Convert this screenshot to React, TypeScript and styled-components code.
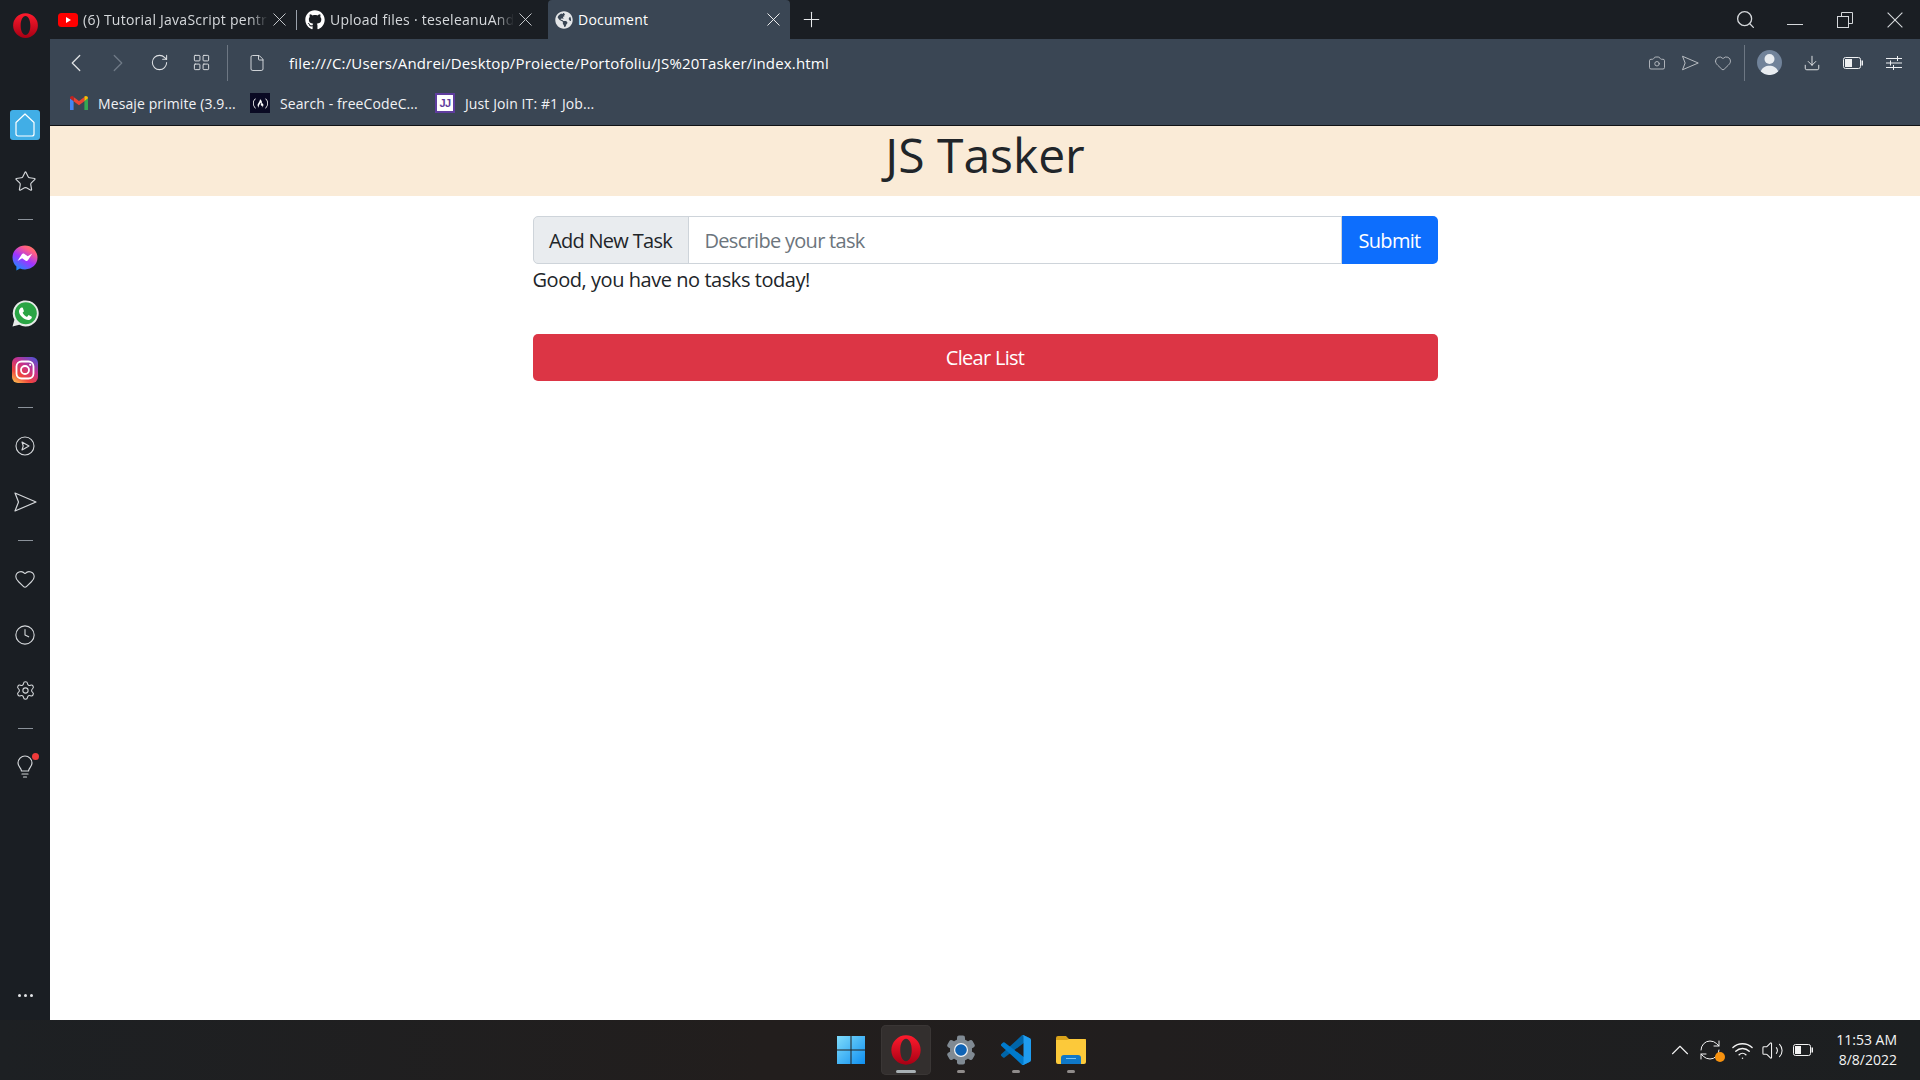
import React from "react";
import styled, { createGlobalStyle } from "styled-components";
import {
  Camera,
  ChevronLeft,
  ChevronRight,
  ChevronUp,
  Clock,
  Download,
  File,
  Heart,
  LayoutGrid,
  Plus,
  RefreshCw,
  RotateCw,
  Search,
  Settings,
  Star,
  Volume2,
  Wifi,
} from "lucide-react";
import { FaGithub, FaGlobeAmericas } from "react-icons/fa";
import { SiFreecodecamp } from "react-icons/si";

const GlobalStyle = createGlobalStyle`
  html, body {
    margin: 0;
    padding: 0;
    height: 100%;
    overflow: hidden;
  }
  * {
    box-sizing: border-box;
  }
  body {
    font-family: "Open Sans", "Liberation Sans", sans-serif;
  }
`;

const Screen = styled.div`
  width: 1920px;
  height: 1080px;
  display: flex;
  flex-direction: column;
`;
const Desktop = styled.div`
  flex: 1;
  display: flex;
  min-height: 0;
`;

/* left rail */
const Rail = styled.nav`
  width: 50px;
  flex-shrink: 0;
  background: #1a1e23;
  display: flex;
  flex-direction: column;
  align-items: center;
  color: #d4d7da;
`;
const RailLogo = styled.div`
  height: 97px;
  padding-top: 12px;
  display: flex;
  justify-content: center;
`;
const RailSlot = styled.div`
  height: 56px;
  width: 100%;
  display: flex;
  align-items: center;
  justify-content: center;
  position: relative;
`;
const RailDash = styled.div`
  height: 20.5px;
  display: flex;
  align-items: center;
  &::before {
    content: "";
    width: 15px;
    height: 1px;
    background: #8b929a;
  }
`;
const RailMore = styled(RailSlot)`
  margin-top: auto;
  height: 50px;
  gap: 3px;
`;
const MoreDot = styled.span`
  width: 3px;
  height: 3px;
  border-radius: 50%;
  background: #e3e5e7;
`;
const HomeButton = styled.div`
  width: 30px;
  height: 30px;
  border-radius: 3px;
  background: #41aee6;
  display: flex;
  align-items: center;
  justify-content: center;
`;
const NoticeDot = styled.span`
  position: absolute;
  top: 14px;
  right: 11px;
  width: 7px;
  height: 7px;
  border-radius: 50%;
  background: #f03a3a;
`;

/* browser */
const Browser = styled.div`
  flex: 1;
  min-width: 0;
  display: flex;
  flex-direction: column;
`;
const TabStrip = styled.div`
  height: 39px;
  flex-shrink: 0;
  background: #1a1e23;
  display: flex;
  align-items: stretch;
  color: #d6d9dc;
`;
const Tab = styled.div<{ $active?: boolean; $width: number; $left: number; $right: number }>`
  width: ${(p) => p.$width}px;
  padding: 0 ${(p) => p.$right}px 0 ${(p) => p.$left}px;
  background: ${(p) => (p.$active ? "#3a4654" : "transparent")};
  border-radius: ${(p) => (p.$active ? "4px 4px 0 0" : "0")};
  display: flex;
  align-items: center;
  gap: 5px;
  font-size: 14px;
  letter-spacing: 0.25px;
  color: ${(p) => (p.$active ? "#ffffff" : "#d6d9dc")};
`;
const TabTitle = styled.span<{ $fade?: boolean }>`
  flex: 1;
  min-width: 0;
  white-space: nowrap;
  ${(p) =>
    p.$fade &&
    "mask-image: linear-gradient(to right, #000 90%, transparent 100%);"}
`;
const TabDivider = styled.div`
  width: 1px;
  height: 20px;
  align-self: center;
  background: #9aa2ab;
`;
const NewTab = styled.div`
  width: 43px;
  display: flex;
  align-items: center;
  justify-content: center;
  color: #e8eaec;
`;
const WindowControls = styled.div`
  margin-left: auto;
  display: flex;
  align-items: center;
  color: #d5d8db;
`;
const WindowButton = styled.div`
  width: 50px;
  display: flex;
  justify-content: center;
`;
const MinimizeLine = styled.span`
  width: 16px;
  height: 1px;
  margin-top: 9px;
  background: #d5d8db;
`;

const Chrome = styled.div`
  height: 87px;
  flex-shrink: 0;
  background: #3a4654;
  border-bottom: 1px solid #101215;
  display: flex;
  flex-direction: column;
`;
const AddressRow = styled.div`
  height: 47px;
  display: flex;
  align-items: center;
  color: #dfe2e5;
`;
const NavButton = styled.div<{ $dim?: boolean; $width?: number }>`
  width: ${(p) => p.$width ?? 42}px;
  display: flex;
  align-items: center;
  justify-content: center;
  color: ${(p) => (p.$dim ? "#6f7a87" : "#dfe2e5")};
`;
const NavGroup = styled.div`
  display: flex;
  align-items: center;
  padding: 0 5px 0 5px;
`;
const ChromeDivider = styled.div`
  width: 1px;
  height: 36px;
  background: #6d7783;
`;
const PageIcon = styled.div`
  margin-left: 20px;
  display: flex;
`;
const Url = styled.div`
  margin-left: 23px;
  font-size: 15px;
  letter-spacing: 0.18px;
  color: #ffffff;
  white-space: nowrap;
`;
const RightTools = styled.div`
  margin-left: auto;
  padding-right: 6px;
  display: flex;
  align-items: center;
`;
const ToolButton = styled.div<{ $width?: number; $light?: boolean }>`
  width: ${(p) => p.$width ?? 33}px;
  display: flex;
  justify-content: center;
  color: ${(p) => (p.$light ? "#eef0f2" : "#c6cace")};
`;
const ToolSeparator = styled(ChromeDivider)`
  margin-left: 5px;
`;
const Avatar = styled.div`
  margin: 0 9px 0 12px;
  width: 25px;
  height: 25px;
  display: flex;
`;
const BookmarkRow = styled.div`
  flex: 1;
  display: flex;
  align-items: center;
  padding-left: 20px;
  padding-bottom: 5px;
  gap: 16px;
`;
const Bookmark = styled.div<{ $width: number }>`
  width: ${(p) => p.$width}px;
  display: flex;
  align-items: center;
  gap: 10px;
  font-size: 14px;
  letter-spacing: 0.1px;
  color: #f1f2f4;
  white-space: nowrap;
`;
const CodeCampBadge = styled.div`
  width: 20px;
  height: 20px;
  background: #0a0a23;
  color: #ffffff;
  display: flex;
  align-items: center;
  justify-content: center;
  flex-shrink: 0;
`;
const JustJoinBadge = styled.span`
  width: 20px;
  height: 20px;
  flex-shrink: 0;
  background: #ffffff;
  border: 2px solid #5f3d9e;
  color: #5f3d9e;
  font: 700 11px/16px "Liberation Sans", sans-serif;
  letter-spacing: -0.5px;
  text-align: center;
`;

/* page */
const Page = styled.main`
  flex: 1;
  background: #ffffff;
  color: #212529;
`;
const Header = styled.header`
  height: 70px;
  background: #faebd7;
  text-align: center;
`;
const Title = styled.h1`
  margin: 0;
  font-size: 48px;
  font-weight: 400;
  line-height: 58px;
  letter-spacing: 0;
  color: #212529;
`;
const Content = styled.section`
  width: 905px;
  margin: 20px auto 0;
`;
const InputGroup = styled.form`
  display: flex;
  height: 48px;
`;
const GroupLabel = styled.span`
  width: 156px;
  display: flex;
  align-items: center;
  justify-content: center;
  background: #e9ecef;
  border: 1px solid #ced4da;
  border-radius: 5px 0 0 5px;
  font-size: 20px;
  letter-spacing: -0.7px;
  color: #212529;
  white-space: nowrap;
`;
const TaskInput = styled.input`
  flex: 1;
  min-width: 0;
  margin-left: -1px;
  padding: 0 16px;
  border: 1px solid #ced4da;
  outline: none;
  font: inherit;
  font-size: 20px;
  letter-spacing: -0.7px;
  color: #212529;
  &::placeholder {
    color: #6c757d;
    opacity: 1;
  }
`;
const SubmitButton = styled.button`
  width: 96px;
  border: 0;
  padding: 0;
  border-radius: 0 5px 5px 0;
  background: #0d6efd;
  color: #ffffff;
  font: inherit;
  font-size: 20px;
  letter-spacing: -0.7px;
`;
const Message = styled.p`
  margin: 0;
  height: 70px;
  font-size: 20px;
  line-height: 32px;
  letter-spacing: -0.45px;
`;
const ClearButton = styled.button`
  width: 100%;
  height: 47px;
  border: 0;
  border-radius: 5px;
  background: #dc3545;
  color: #ffffff;
  font: inherit;
  font-size: 20px;
  letter-spacing: -0.7px;
`;

/* taskbar */
const Taskbar = styled.footer`
  height: 60px;
  flex-shrink: 0;
  background: linear-gradient(to right, #1d2023, #221e1d 40%, #211e1e 60%, #1c1f21);
  display: grid;
  grid-template-columns: 1fr auto 1fr;
  align-items: center;
`;
const TaskIcons = styled.div`
  grid-column: 2;
  margin-left: 1px;
  display: flex;
  gap: 5px;
`;
const TaskIcon = styled.div<{ $active?: boolean }>`
  width: 50px;
  height: 50px;
  position: relative;
  display: flex;
  align-items: center;
  justify-content: center;
  border-radius: 5px;
  ${(p) =>
    p.$active &&
    "background: #332f2e; box-shadow: inset 0 0 0 1px #3a3635;"}
`;
const RunDot = styled.span<{ $wide?: boolean }>`
  position: absolute;
  bottom: 2px;
  left: 50%;
  transform: translateX(-50%);
  width: ${(p) => (p.$wide ? 20 : 8)}px;
  height: 3px;
  border-radius: 2px;
  background: ${(p) => (p.$wide ? "#a9b1b5" : "#8f8b8a")};
`;
const Tray = styled.div`
  justify-self: end;
  display: flex;
  align-items: center;
  padding-right: 23px;
  color: #f2f2f2;
`;
const TrayIcon = styled.div<{ $width: number }>`
  width: ${(p) => p.$width}px;
  position: relative;
  display: flex;
  justify-content: center;
`;
const SyncDot = styled.span`
  position: absolute;
  right: 0;
  bottom: 0;
  width: 10px;
  height: 10px;
  border-radius: 50%;
  background: #f7920f;
`;
const Clockface = styled.div`
  margin-left: 15px;
  text-align: right;
  font-size: 14px;
  line-height: 20px;
  color: #f4f4f4;
`;

/* drawn logos */
function CloseIcon({ size }: { size: number }) {
  return (
    <svg width={size} height={size} viewBox="0 0 13 13" fill="none" stroke="currentColor" strokeWidth="0.9" style={{ flexShrink: 0 }}>
      <path d="M.5.5l12 12M12.500.5l-12 12" />
    </svg>
  );
}
function OperaLogo({ size }: { size: number }) {
  return (
    <svg width={size} height={size} viewBox="0 0 24 24">
      <defs>
        <linearGradient id={`op${size}`} x1="0" y1="0" x2="0" y2="1">
          <stop offset="0" stopColor="#ff1b2d" />
          <stop offset="1" stopColor="#a70014" />
        </linearGradient>
      </defs>
      <path
        fillRule="evenodd"
        fill={`url(#op${size})`}
        d="M12 1a11 11 0 1 0 0 22 11 11 0 0 0 0-22zm0 2.6c2.6 0 4.3 3.8 4.3 8.4s-1.7 8.4-4.3 8.4-4.3-3.8-4.3-8.4 1.7-8.4 4.3-8.4z"
      />
    </svg>
  );
}
function YoutubeLogo() {
  return (
    <svg width="20" height="14" viewBox="0 0 20 14" style={{ flexShrink: 0 }}>
      <rect width="20" height="14" rx="3.500" fill="#f00" />
      <path d="M8 4l5 3-5 3z" fill="#fff" />
    </svg>
  );
}
function GmailLogo() {
  return (
    <svg width="18" height="14" viewBox="0 0 18 14" style={{ flexShrink: 0 }}>
      <path d="M0 2.200V14h3.600V5z" fill="#4285f4" />
      <path d="M18 2.200V14h-3.600V5z" fill="#34a853" />
      <path d="M3.600 5.200V1L9 5l5.400-4v4.200L9 9.200z" fill="#ea4335" />
      <path d="M0 2.200C0 .4 2.200-.6 3.600.6v4.600z" fill="#c5221f" />
      <path d="M18 2.200C18 .4 15.800-.6 14.400.6v4.600z" fill="#fbbc04" />
    </svg>
  );
}
function MessengerLogo() {
  return (
    <svg width="26" height="26" viewBox="0 0 26 26">
      <defs>
        <linearGradient id="ms" x1="0.2" y1="1" x2="0.8" y2="0">
          <stop offset="0" stopColor="#1292ff" />
          <stop offset="0.45" stopColor="#a033ff" />
          <stop offset="0.8" stopColor="#ff5c87" />
          <stop offset="1" stopColor="#ff7a59" />
        </linearGradient>
      </defs>
      <path
        fill="url(#ms)"
        d="M13 .5C6 .5.5 5.700.5 12.600c0 3.600 1.500 6.800 3.900 9v3.900l3.600-2c1.500.6 3.200.9 5 .9 7 0 12.500-5.200 12.500-11.800S20 .5 13 .5z"
      />
      <path
        fill="#fff"
        d="M5.500 16l4.200-6.600c.6-.9 1.900-1.100 2.800-.5l3.200 2.400 4.600-2.800-4.200 6.600c-.6.9-1.900 1.100-2.800.5l-3.200-2.400z"
      />
    </svg>
  );
}
function WhatsappLogo() {
  return (
    <svg width="27" height="27" viewBox="0 0 27 27">
      <path fill="#e8ebe9" d="M.5 26.500l1.900-6.700A13 13 0 1 1 7.300 24.700z" />
      <circle cx="13.800" cy="13.300" r="11" fill="#2aa544" />
      <path
        fill="#fff"
        d="M10 7.500c-.5 0-1.300.2-1.900 1-.6.800-1.200 1.800-1.100 3.200.2 2 1.500 3.900 3.300 5.600 2 1.800 4 2.700 6 2.800 1.400 0 2.500-.7 3.100-1.500.4-.6.500-1.400.4-1.900l-3.200-1.600-1.600 1.800c-1.700-.6-3.600-2.300-4.400-4.200l1.400-1.500-1.200-3.500z"
      />
    </svg>
  );
}
function InstagramLogo() {
  return (
    <svg width="26" height="26" viewBox="0 0 26 26">
      <defs>
        <linearGradient id="ig" x1="0.1" y1="1" x2="0.8" y2="0">
          <stop offset="0" stopColor="#fdc04f" />
          <stop offset="0.3" stopColor="#f0453d" />
          <stop offset="0.65" stopColor="#c4318f" />
          <stop offset="1" stopColor="#5a4fcf" />
        </linearGradient>
      </defs>
      <rect width="26" height="26" rx="6" fill="url(#ig)" />
      <rect x="4.500" y="4.500" width="17" height="17" rx="5" fill="none" stroke="#fff" strokeWidth="1.800" />
      <circle cx="13" cy="13" r="4" fill="none" stroke="#fff" strokeWidth="1.800" />
      <circle cx="18.200" cy="7.800" r="1.100" fill="#fff" />
    </svg>
  );
}
function HouseOutline() {
  return (
    <svg width="22" height="26" viewBox="0 0 22 26" fill="none" stroke="#fff" strokeWidth="1.200">
      <path d="M2 10.500L11 2l9 8.500V22a2 2 0 0 1-2 2H4a2 2 0 0 1-2-2z" strokeLinejoin="round" />
    </svg>
  );
}
function SendOutline({ size, stroke = 1.2 }: { size: number; stroke?: number }) {
  return (
    <svg width={size} height={size} viewBox="0 0 24 24" fill="none" stroke="currentColor" strokeWidth={stroke} strokeLinejoin="round">
      <path d="M2 3l21 9-21 9 3.500-9z" />
    </svg>
  );
}
function PlayRing() {
  return (
    <svg width="20" height="20" viewBox="0 0 20 20" fill="none" stroke="currentColor" strokeWidth="1.100" strokeLinejoin="round">
      <circle cx="10" cy="10" r="9" />
      <path d="M7 6l7 4-7 4 1.200-4z" />
    </svg>
  );
}
function RestoreIcon() {
  return (
    <svg width="16" height="16" viewBox="0 0 16 16" fill="none" stroke="currentColor" strokeWidth="1">
      <rect x="0.500" y="4.500" width="11" height="11" />
      <path d="M4.500 4.500V.5h11v11h-4" />
    </svg>
  );
}
function BatteryIcon({ color, level }: { color: string; level: number }) {
  return (
    <svg width="20" height="12" viewBox="0 0 20 12">
      <rect x="0.500" y="0.500" width="17" height="11" rx="2" fill="none" stroke={color} />
      <rect x="2" y="2" width={level} height="8" fill={color} />
      <rect x="18.500" y="3.500" width="1.500" height="5" fill={color} />
    </svg>
  );
}
function SlidersIcon() {
  return (
    <svg width="16" height="14" viewBox="0 0 16 14" fill="none" stroke="currentColor" strokeWidth="1">
      <path d="M0 2.500h16M0 7h16M0 11.500h16M11.500 0v5M4.500 4.500v5M7.500 9v5" />
    </svg>
  );
}
function AvatarIcon() {
  return (
    <svg width="25" height="25" viewBox="0 0 25 25">
      <circle cx="12.500" cy="12.500" r="12.500" fill="#71839a" />
      <circle cx="12.500" cy="9" r="5" fill="#e9edf1" />
      <path d="M3.800 21.500c1-3.800 5-5.800 8.700-5.800s7.700 2 8.700 5.800a12.500 12.500 0 0 1-17.400 0z" fill="#e9edf1" />
    </svg>
  );
}
function WindowsLogo() {
  return (
    <svg width="30" height="30" viewBox="0 0 30 30">
      <defs>
        <linearGradient id="win" x1="0" y1="0" x2="1" y2="1">
          <stop offset="0" stopColor="#7fdcfb" />
          <stop offset="1" stopColor="#0f8ff0" />
        </linearGradient>
      </defs>
      <path fill="url(#win)" d="M1 1h13.500v13.500H1zM15.500 1H29v13.500H15.500zM1 15.500h13.500V29H1zM15.500 15.500H29V29H15.500z" />
    </svg>
  );
}
function GearLogo() {
  const teeth = [0, 60, 120];
  return (
    <svg width="30" height="30" viewBox="0 0 30 30">
      {teeth.map((deg) => (
        <rect key={deg} x="11" y="0.500" width="8" height="29" rx="2" fill="#808a93" transform={`rotate(${deg} 15 15)`} />
      ))}
      <circle cx="15" cy="15" r="11" fill="#808a93" />
      <circle cx="15" cy="15" r="7" fill="#f2f4f6" />
      <circle cx="15" cy="15" r="5.800" fill="#0f63b5" />
    </svg>
  );
}
function VsCodeLogo() {
  return (
    <svg width="30" height="30" viewBox="0 0 100 100">
      <path fill="#0065a9" d="M96.460 10.800L75.860.88a6.230 6.230 0 0 0-7.100 1.200L1.300 63.600a4.170 4.170 0 0 0 0 6.160l5.500 5a4.170 4.170 0 0 0 5.320.24L93.300 13.400a4.140 4.140 0 0 1 6.700 3.300v-.24a6.250 6.250 0 0 0-3.540-5.660z" />
      <path fill="#007acc" d="M96.460 89.200L75.860 99.120a6.230 6.230 0 0 1-7.100-1.200L1.300 36.400a4.170 4.170 0 0 1 0-6.160l5.500-5a4.170 4.170 0 0 1 5.320-.24L93.300 86.600a4.140 4.140 0 0 0 6.700-3.300v.24a6.250 6.250 0 0 1-3.540 5.660z" />
      <path fill="#1f9cf0" d="M75.860 99.130a6.230 6.230 0 0 1-7.100-1.200c2.300 2.300 6.240.67 6.240-2.600V4.670c0-3.270-3.940-4.900-6.240-2.600a6.230 6.230 0 0 1 7.100-1.200l20.600 9.900A6.250 6.250 0 0 1 100 16.400v67.200a6.250 6.250 0 0 1-3.540 5.630z" />
    </svg>
  );
}
function FolderLogo() {
  return (
    <svg width="30" height="28" viewBox="0 0 30 28">
      <path fill="#d9a21a" d="M0 2a2 2 0 0 1 2-2h8l3 3h17v6H0z" />
      <path fill="#fcc93a" d="M0 4h11l2-1h15a2 2 0 0 1 2 2v21a2 2 0 0 1-2 2H2a2 2 0 0 1-2-2z" />
      <path fill="#0f78c8" d="M5 22a3 3 0 0 1 3-3h14a3 3 0 0 1 3 3v6H5z" />
      <path fill="#7cc4f0" d="M10 22h10v1H10z" />
    </svg>
  );
}

const App: React.FC = () => {
  return (
    <>
      <GlobalStyle />
      <Screen>
        <Desktop>
          <Rail>
            <RailLogo>
              <OperaLogo size={27} />
            </RailLogo>
            <RailSlot>
              <HomeButton>
                <HouseOutline />
              </HomeButton>
            </RailSlot>
            <RailSlot>
              <Star size={23} strokeWidth={1.2} />
            </RailSlot>
            <RailDash />
            <RailSlot>
              <MessengerLogo />
            </RailSlot>
            <RailSlot>
              <WhatsappLogo />
            </RailSlot>
            <RailSlot>
              <InstagramLogo />
            </RailSlot>
            <RailDash />
            <RailSlot>
              <PlayRing />
            </RailSlot>
            <RailSlot>
              <SendOutline size={24} />
            </RailSlot>
            <RailDash />
            <RailSlot>
              <Heart size={22} strokeWidth={1.2} />
            </RailSlot>
            <RailSlot>
              <Clock size={22} strokeWidth={1.2} />
            </RailSlot>
            <RailSlot>
              <Settings size={21} strokeWidth={1.2} />
            </RailSlot>
            <RailDash />
            <RailSlot>
              <svg width="22" height="26" viewBox="0 0 22 26" fill="none" stroke="currentColor" strokeWidth="1.200" strokeLinecap="round">
                <path d="M7.500 17c0-3-3.500-4-3.500-8a7 7 0 0 1 14 0c0 4-3.500 5-3.500 8zM8 20h6M9.500 23h3" />
              </svg>
              <NoticeDot />
            </RailSlot>
            <RailMore>
              <MoreDot />
              <MoreDot />
              <MoreDot />
            </RailMore>
          </Rail>

          <Browser>
            <TabStrip>
              <Tab $width={246} $left={8} $right={10}>
                <YoutubeLogo />
                <TabTitle $fade>(6) Tutorial JavaScript pentr</TabTitle>
                <CloseIcon size={13} />
              </Tab>
              <TabDivider />
              <Tab $width={251} $left={8} $right={16}>
                <FaGithub size={20} color="#ffffff" style={{ flexShrink: 0 }} />
                <TabTitle $fade>Upload files · teseleanuAnd</TabTitle>
                <CloseIcon size={13} />
              </Tab>
              <Tab $active $width={242} $left={7} $right={10}>
                <FaGlobeAmericas size={18} color="#e4e6e8" style={{ flexShrink: 0 }} />
                <TabTitle>Document</TabTitle>
                <CloseIcon size={13} />
              </Tab>
              <NewTab>
                <Plus size={25} strokeWidth={1} />
              </NewTab>
              <WindowControls>
                <WindowButton>
                  <Search size={21} strokeWidth={1.5} />
                </WindowButton>
                <WindowButton>
                  <MinimizeLine />
                </WindowButton>
                <WindowButton>
                  <RestoreIcon />
                </WindowButton>
                <WindowButton>
                  <CloseIcon size={16} />
                </WindowButton>
              </WindowControls>
            </TabStrip>

            <Chrome>
              <AddressRow>
                <NavGroup>
                  <NavButton>
                    <ChevronLeft size={30} strokeWidth={1} />
                  </NavButton>
                  <NavButton $dim $width={41}>
                    <ChevronRight size={30} strokeWidth={1} />
                  </NavButton>
                  <NavButton>
                    <RotateCw size={19} strokeWidth={1.3} />
                  </NavButton>
                  <NavButton>
                    <LayoutGrid size={19} strokeWidth={1.2} />
                  </NavButton>
                </NavGroup>
                <ChromeDivider />
                <PageIcon>
                  <File size={18} strokeWidth={1.2} />
                </PageIcon>
                <Url>file:///C:/Users/Andrei/Desktop/Proiecte/Portofoliu/JS%20Tasker/index.html</Url>
                <RightTools>
                  <ToolButton>
                    <Camera size={18} strokeWidth={1.1} />
                  </ToolButton>
                  <ToolButton>
                    <SendOutline size={18} />
                  </ToolButton>
                  <ToolButton>
                    <Heart size={18} strokeWidth={1.1} />
                  </ToolButton>
                  <ToolSeparator />
                  <Avatar>
                    <AvatarIcon />
                  </Avatar>
                  <ToolButton $light $width={41}>
                    <Download size={18} strokeWidth={1.2} />
                  </ToolButton>
                  <ToolButton $light $width={41}>
                    <BatteryIcon color="#eef0f2" level={7} />
                  </ToolButton>
                  <ToolButton $light $width={41}>
                    <SlidersIcon />
                  </ToolButton>
                </RightTools>
              </AddressRow>
              <BookmarkRow>
                <Bookmark $width={164}>
                  <GmailLogo />
                  Mesaje primite (3.9...
                </Bookmark>
                <Bookmark $width={169}>
                  <CodeCampBadge>
                    <SiFreecodecamp size={15} />
                  </CodeCampBadge>
                  Search - freeCodeC...
                </Bookmark>
                <Bookmark $width={170}>
                  <JustJoinBadge>JJ</JustJoinBadge>
                  Just Join IT: #1 Job...
                </Bookmark>
              </BookmarkRow>
            </Chrome>

            <Page>
              <Header>
                <Title>JS Tasker</Title>
              </Header>
              <Content>
                <InputGroup onSubmit={(e) => e.preventDefault()}>
                  <GroupLabel>Add New Task</GroupLabel>
                  <TaskInput placeholder="Describe your task" />
                  <SubmitButton type="submit">Submit</SubmitButton>
                </InputGroup>
                <Message>Good, you have no tasks today!</Message>
                <ClearButton type="button">Clear List</ClearButton>
              </Content>
            </Page>
          </Browser>
        </Desktop>

        <Taskbar>
          <TaskIcons>
            <TaskIcon>
              <WindowsLogo />
            </TaskIcon>
            <TaskIcon $active>
              <OperaLogo size={32} />
              <RunDot $wide />
            </TaskIcon>
            <TaskIcon>
              <GearLogo />
              <RunDot />
            </TaskIcon>
            <TaskIcon>
              <VsCodeLogo />
              <RunDot />
            </TaskIcon>
            <TaskIcon>
              <FolderLogo />
              <RunDot />
            </TaskIcon>
          </TaskIcons>
          <Tray>
            <TrayIcon $width={30}>
              <ChevronUp size={30} strokeWidth={0.9} />
            </TrayIcon>
            <TrayIcon $width={30}>
              <RefreshCw size={24} strokeWidth={1} />
              <SyncDot />
            </TrayIcon>
            <TrayIcon $width={34}>
              <Wifi size={23} strokeWidth={1.5} />
            </TrayIcon>
            <TrayIcon $width={26}>
              <Volume2 size={23} strokeWidth={1.1} />
            </TrayIcon>
            <TrayIcon $width={36}>
              <BatteryIcon color="#f2f2f2" level={6} />
            </TrayIcon>
            <Clockface>
              11:53 AM
              <br />
              8/8/2022
            </Clockface>
          </Tray>
        </Taskbar>
      </Screen>
    </>
  );
};

export default App;
